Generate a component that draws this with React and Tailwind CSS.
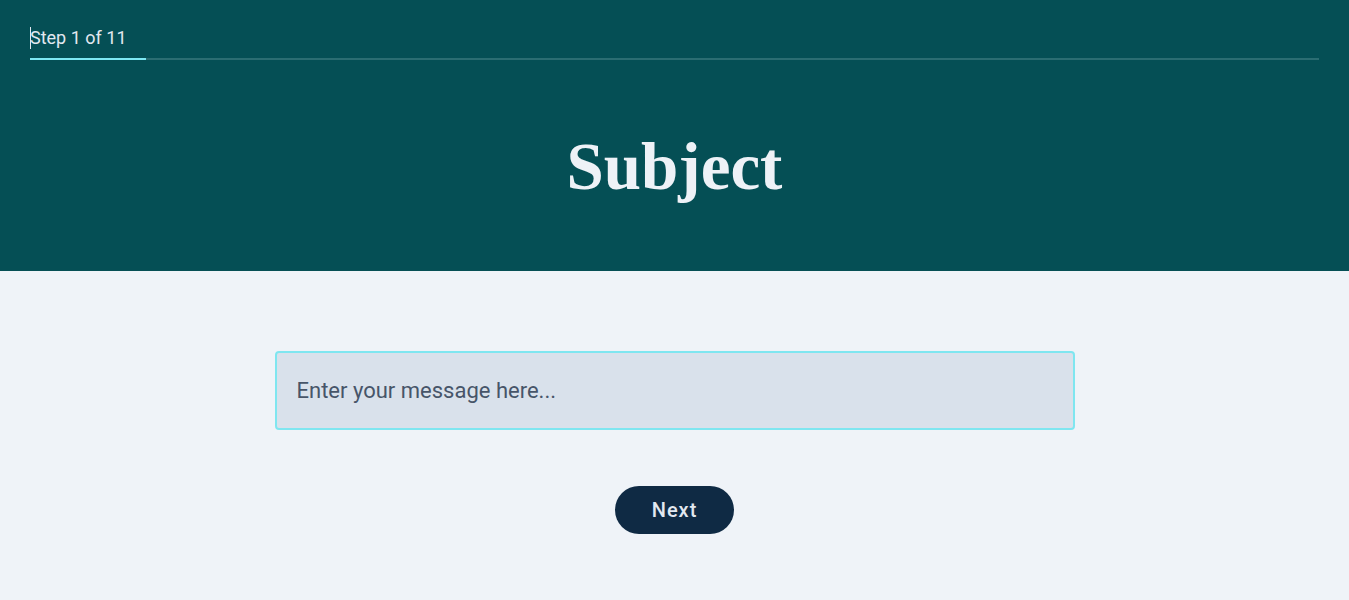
import React from 'react';

export default function App() {
  return (
    <div className="min-h-screen bg-[#eff3f8]" style={{ fontFamily: 'Roboto, "Noto Sans", sans-serif' }}>
      <header className="h-[271px] bg-[#054f55] px-[30px] pt-[27px]">
        <div className="flex items-center">
          <span className="h-[22px] w-px bg-slate-200" />
          <span className="-ml-px text-[18px] leading-[22px] text-slate-200">Step 1 of 11</span>
        </div>
        <div className="mt-[9px] flex h-[2px] bg-[#2b6d72]">
          <div className="w-[116px] bg-[#7ee8f3]" />
        </div>
        <h1
          className="mt-[66px] text-center text-[67px] font-bold leading-[80px] text-[#eef2f7]"
          style={{ fontFamily: '"Liberation Serif", "DejaVu Serif", serif' }}
        >
          Subject
        </h1>
      </header>

      <main className="flex flex-col items-center pt-[80px]">
        <input
          type="text"
          placeholder="Enter your message here..."
          className="h-[79px] w-[800px] rounded-[4px] border-2 border-[#7fe6f0] bg-[#d9e1eb] px-[20px] text-[22px] text-slate-700 outline-none placeholder:text-[#475569]"
        />
        <button
          type="button"
          className="mt-[56px] h-[48px] w-[119px] rounded-full bg-[#0f2a44] text-[20px] font-medium tracking-wider text-slate-200"
        >
          Next
        </button>
      </main>
    </div>
  );
}
